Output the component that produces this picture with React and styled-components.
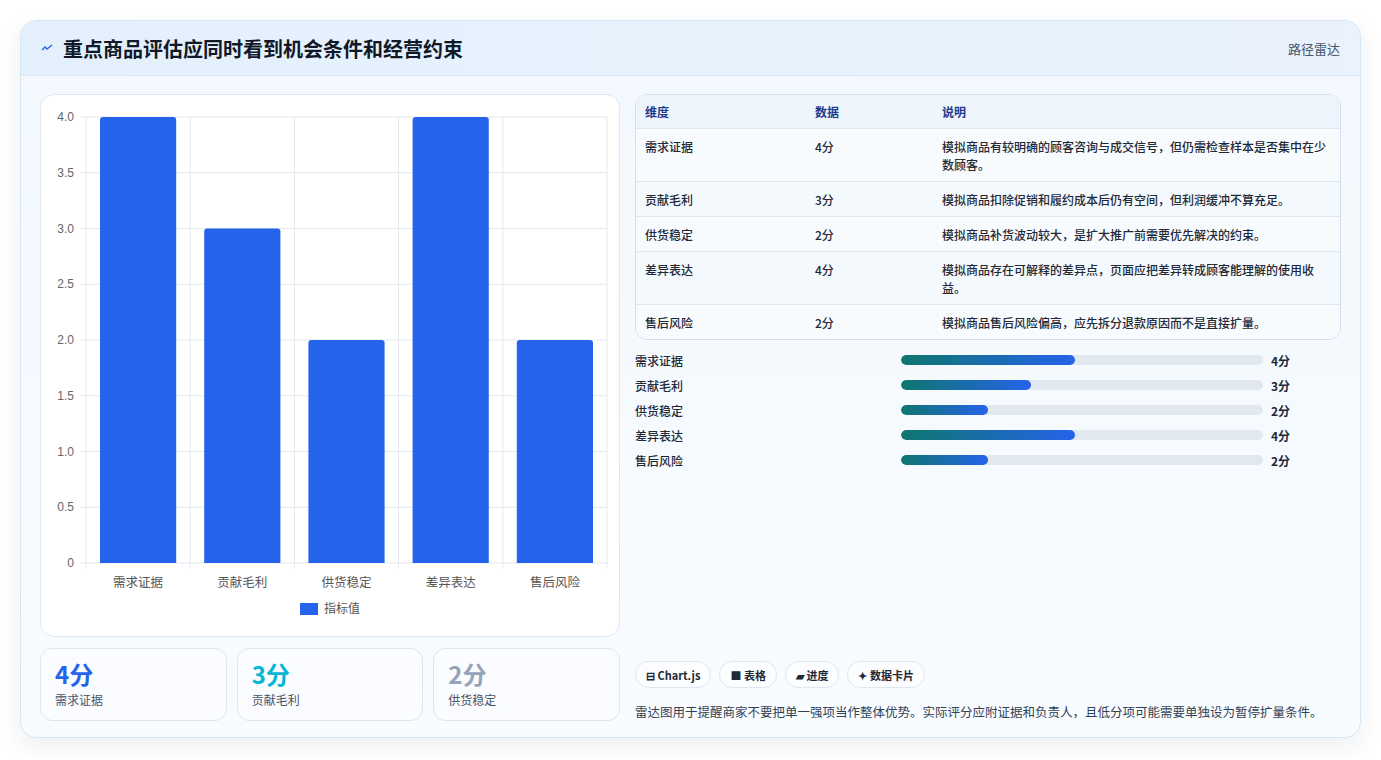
import React from "react";
import styled, { createGlobalStyle } from "styled-components";

const G = createGlobalStyle`
  body{margin:0;background:#fff;font-family:"Noto Sans CJK SC","Noto Sans",sans-serif;}
`;
const Page = styled.div`padding:20px 20px;`;
const Card = styled.div`
  height:718px;box-sizing:border-box;border:1px solid #d6e6f3;border-radius:16px;
  background:linear-gradient(180deg,#f3f8fe,#f8fcff);box-shadow:0 8px 24px rgba(15,40,80,.08);
  overflow:hidden;display:flex;flex-direction:column;`;
const Header = styled.div`
  height:54px;flex:none;display:flex;align-items:center;justify-content:space-between;padding:0 20px;
  background:linear-gradient(90deg,#e3f0fc,#eaf3fd);border-bottom:1px solid #d9e8f5;`;
const Title = styled.h1`margin:0;font-size:20px;font-weight:700;color:#111827;display:flex;align-items:center;gap:10px;`;
const Tag = styled.span`font-size:13px;color:#475569;`;
const Body = styled.div`flex:1;display:grid;grid-template-columns:580px 1fr;gap:15px;padding:18px 19px 18px 19px;`;
const Left = styled.div`display:flex;flex-direction:column;gap:11px;`;
const ChartBox = styled.div`height:543px;box-sizing:border-box;background:#fff;border:1px solid #dfe8f1;border-radius:14px;position:relative;`;
const Stats = styled.div`display:grid;grid-template-columns:repeat(3,1fr);gap:10px;`;
const Stat = styled.div`height:73px;box-sizing:border-box;border:1px solid #dde7f1;border-radius:12px;background:#fafcff;padding:10px 14px;`;
const StatVal = styled.div`font-size:24px;font-weight:700;color:${p=>p.c};line-height:30px;`;
const StatLbl = styled.div`font-size:12px;color:#475569;margin-top:2px;`;
const Right = styled.div`display:flex;flex-direction:column;`;
const Table = styled.div`border:1px solid #d3dfec;border-radius:12px;overflow:hidden;background:#f6fafe;`;
const Row = styled.div`display:grid;grid-template-columns:170px 127px 1fr;padding:0 10px 0 9px;
  min-height:${p=>p.h}px;align-items:start;padding-top:${p=>p.head?8:9}px;box-sizing:border-box;
  background:${p=>p.head?"#eef5fd":p.alt?"#f4f9fd":"#f7fbfe"};
  border-top:${p=>p.first?"none":"1px solid #dfe7ef"};
  font-size:12px;line-height:18px;color:${p=>p.head?"#1e3a8a":"#1f2937"};font-weight:${p=>p.head?600:500};`;
const Bars = styled.div`display:flex;flex-direction:column;gap:7px;margin-top:11px;`;
const BarRow = styled.div`display:grid;grid-template-columns:266px 370px auto;align-items:center;gap:0;font-size:12px;color:#1f2937;height:18px;font-weight:500;`;
const Track = styled.div`height:10px;border-radius:5px;background:#e2e8f0;overflow:hidden;margin-right:8px;`;
const Fill = styled.div`height:100%;border-radius:5px;background:linear-gradient(90deg,#0f766e,#2563eb);`;
const Val = styled.span`font-weight:700;`;
const Chips = styled.div`margin-top:auto;display:flex;gap:8px;`;
const Chip = styled.span`height:27px;box-sizing:border-box;padding:0 10px;border:1px solid #dfe6ee;border-radius:14px;background:#fbfdff;font-size:11px;font-weight:600;color:#1f2937;display:flex;align-items:center;gap:4px;`;
const Note = styled.p`margin:14px 0 0;font-size:12.5px;line-height:19px;color:#334155;`;

const data=[["需求证据",4,"模拟商品有较明确的顾客咨询与成交信号，但仍需检查样本是否集中在少数顾客。"],
["贡献毛利",3,"模拟商品扣除促销和履约成本后仍有空间，但利润缓冲不算充足。"],
["供货稳定",2,"模拟商品补货波动较大，是扩大推广前需要优先解决的约束。"],
["差异表达",4,"模拟商品存在可解释的差异点，页面应把差异转成顾客能理解的使用收益。"],
["售后风险",2,"模拟商品售后风险偏高，应先拆分退款原因而不是直接扩量。"]];
const hs=[53,35,35,53,35];

function Chart(){
  const x0=45,x1=566,y0=22,y1=468,cw=(x1-x0)/5;
  const ticks=[0,0.5,1,1.5,2,2.5,3,3.5,4];
  const y=v=>y1-(v/4)*(y1-y0);
  return <svg width="578" height="541" style={{display:"block"}}>
    {ticks.map(t=><g key={t}><line x1={x0-6} x2={x1} y1={y(t)} y2={y(t)} stroke="#e5e7eb"/>
      <text x={x0-12} y={y(t)+4} textAnchor="end" fontSize="12" fill="#666" fontFamily="Liberation Sans">{t===0?"0":t.toFixed(1)}</text></g>)}
    {[0,1,2,3,4,5].map(i=><line key={i} x1={x0+i*cw} x2={x0+i*cw} y1={y0} y2={y1+6} stroke="#e5e7eb"/>)}
    {data.map((d,i)=>{const bx=x0+i*cw+14,bw=cw-28,by=y(d[1]);
      return <g key={i}><path d={`M${bx},${y1}V${by+3}Q${bx},${by} ${bx+3},${by}H${bx+bw-3}Q${bx+bw},${by} ${bx+bw},${by+3}V${y1}Z`} fill="#2563eb"/>
      <text x={x0+i*cw+cw/2} y={y1+24} textAnchor="middle" fontSize="12.5" fill="#555">{d[0]}</text></g>})}
    <rect x="259" y="508" width="18" height="12" fill="#2563eb"/>
    <text x="283" y="518" fontSize="12" fill="#555">指标值</text>
  </svg>;
}

export default function App(){
  return <Page><G/><Card>
    <Header><Title><svg width="12" height="10" viewBox="0 0 12 10"><path d="M1 7 L4 4 L6 6 L11 2" stroke="#2563eb" strokeWidth="1.4" fill="none"/></svg>重点商品评估应同时看到机会条件和经营约束</Title><Tag>路径雷达</Tag></Header>
    <Body>
      <Left>
        <ChartBox><Chart/></ChartBox>
        <Stats>
          <Stat><StatVal c="#2563eb">4分</StatVal><StatLbl>需求证据</StatLbl></Stat>
          <Stat><StatVal c="#06b6d4">3分</StatVal><StatLbl>贡献毛利</StatLbl></Stat>
          <Stat><StatVal c="#94a3b8">2分</StatVal><StatLbl>供货稳定</StatLbl></Stat>
        </Stats>
      </Left>
      <Right>
        <Table>
          <Row head first h={33}><span>维度</span><span>数据</span><span>说明</span></Row>
          {data.map((d,i)=><Row key={i} h={hs[i]} alt={i%2}><span>{d[0]}</span><span>{d[1]}分</span><span>{d[2]}</span></Row>)}
        </Table>
        <Bars>{data.map((d,i)=><BarRow key={i}><span>{d[0]}</span><Track><Fill style={{width:`${d[1]*11.75/0.978}%`}}/></Track><Val>{d[1]}分</Val></BarRow>)}</Bars>
        <Chips><Chip>⊟ Chart.js</Chip><Chip>■ 表格</Chip><Chip>▰ 进度</Chip><Chip>✦ 数据卡片</Chip></Chips>
        <Note>雷达图用于提醒商家不要把单一强项当作整体优势。实际评分应附证据和负责人，且低分项可能需要单独设为暂停扩量条件。</Note>
      </Right>
    </Body>
  </Card></Page>;
}
